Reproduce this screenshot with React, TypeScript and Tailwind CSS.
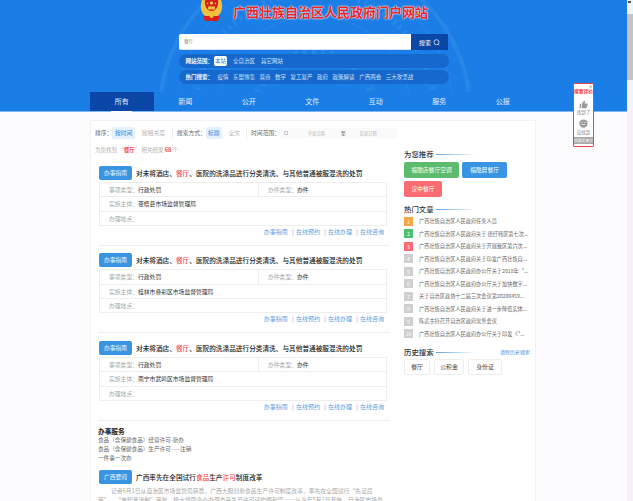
const tabs = ['所有', '新闻', '公开', '文件', '互动', '服务', '公报'];
const hotWords = ['疫情', '东盟博览', '营商', '数字', '复工复产', '政府', '政策解读', '广西两会', '三大攻坚战'];
const articles = [
  '广西壮族自治区人民政府任免人员',
  '广西壮族自治区人民政府关于 德纡韩区第七次...',
  '广西壮族自治区人民政府关于开展我区第六次...',
  '广西壮族自治区人民政府关于印发广西壮族自...',
  '广西壮族自治区人民政府办公厅关于2018年“...',
  '广西壮族自治区人民政府办公厅关于加快数字...',
  '关于自治区政协十二届三次会议第20200459...',
  '广西壮族自治区人民政府关于进一步降低实体...',
  '陈武主持召开自治区政府常务会议',
  '广西壮族自治区人民政府办公厅关于印发《“...',
];
const numColors = ['bg-[#f5a742]', 'bg-[#4cc26e]', 'bg-[#fb6b72]'];
const results = ['苍梧县市场监督管理局', '桂林市叠彩区市场监督管理局', '南宁市武鸣区市场监督管理局'];

function Emblem() {
  return (
    <svg width="25" height="22" viewBox="0 0 25 22" className="shrink-0">
      <path d="M3 0 C0 8 3 15 8 17 L17 17 C22 15 25 8 22 0 Z" fill="#f3c23c" />
      <path d="M6 0 C5 6 8 11 12.5 11 C17 11 20 6 19 0 Z" fill="#d8201f" />
      <circle cx="12.5" cy="3" r="1.6" fill="#f9d94a" />
      <circle cx="8.5" cy="3.5" r="0.7" fill="#f9d94a" />
      <circle cx="16.5" cy="3.5" r="0.7" fill="#f9d94a" />
      <rect x="9" y="6.5" width="7" height="3" fill="#f3c23c" />
      <path d="M4 16 L21 16 L19 21 L6 21 Z" fill="#d8201f" />
      <circle cx="12.5" cy="16" r="2" fill="#f3c23c" />
    </svg>
  );
}

function Pattern() {
  return (
    <svg width="330" height="92" viewBox="0 0 330 92" className="absolute left-[150px] top-0" fill="none" stroke="#4a97ec" strokeOpacity="0.3">
      <circle cx="165" cy="112" r="155" strokeWidth="4" />
      <circle cx="165" cy="112" r="138" strokeWidth="1" />
      <circle cx="165" cy="112" r="120" strokeWidth="6" strokeDasharray="3 4" />
      <circle cx="165" cy="112" r="96" strokeWidth="1" />
      <circle cx="165" cy="112" r="60" strokeWidth="8" strokeDasharray="4 5" />
    </svg>
  );
}

function Header() {
  return (
    <div className="bg-[#1b7ee6]">
      <div className="relative h-[92px] overflow-hidden">
        <Pattern />
        <div className="relative flex flex-col items-center">
          <div className="flex h-[34px] items-start gap-[9px]">
            <Emblem />
            <div className="mt-[3px] text-[13px] leading-[18px] font-bold text-[#e8252a] [text-shadow:0_0_2px_#fff,0_0_1px_#fff]">
              广西壮族自治区人民政府门户网站
            </div>
          </div>
          <div className="flex h-[16px] w-[269px]">
            <div className="flex flex-1 items-center rounded-l-[2px] border-b border-[#cfe2f7] bg-white pl-[5px] text-[4.5px] text-[#888]">餐厅</div>
            <div className="flex w-[37px] items-center justify-center gap-[2px] bg-[#0a47a6] text-[6px] text-white">
              搜索
              <svg width="7" height="7" viewBox="0 0 10 10" fill="none" stroke="#fff" strokeWidth="1"><circle cx="5" cy="4.6" r="3.6" /><path d="M7.4 7.4 L9 9" /></svg>
            </div>
          </div>
          <div className="mt-[4px] flex h-[14px] w-[270px] items-center rounded-[7px] bg-[#1768cc] pl-[7px] text-[5.5px] text-[#cfe3fa]">
            <span className="font-bold text-white">网站范围：</span>
            <span className="ml-[1px] rounded-[2px] bg-white px-[1px] py-[1px] text-[#2b7fdf]">本站</span>
            <span className="ml-[6px]">全自治区</span>
            <span className="ml-[6px]">其它网站</span>
          </div>
          <div className="mt-[2px] flex h-[14px] w-[270px] items-center gap-[4.5px] rounded-[7px] bg-[#1768cc] pl-[7px] text-[5.5px] whitespace-nowrap text-[#cfe3fa]">
            <span className="font-bold text-white">热门搜索：</span>
            {hotWords.map((w) => (
              <span key={w}>{w}</span>
            ))}
          </div>
        </div>
      </div>
      <div className="flex h-[20px] border-b border-[#7db5f0] pl-[90px]">
        {tabs.map((t, i) => (
          <div key={t} className={`relative flex w-[63.5px] items-center justify-center text-[7px] text-[#e3f0fd] ${i === 0 ? 'bg-[#0a47a6]' : ''}`}>
            {t}
            {i === 0 && <span className="absolute bottom-[-1px] left-[21px] h-[1px] w-[21px] bg-white" />}
          </div>
        ))}
      </div>
    </div>
  );
}

function FilterBar() {
  return (
    <div className="flex h-[12px] items-center pl-[4px] text-[5.8px] whitespace-nowrap text-[#666]">
      <span className="w-[18px]">排序：</span>
      <span className="rounded-[2px] bg-[#e4f1fd] px-[2.5px] py-[2px] leading-[8px] text-[#2f86df]">按时间</span>
      <span className="ml-[7px] text-[#b5b5b5]">按相关度</span>
      <span className="ml-[7px] h-[12px] w-px bg-[#eee]" />
      <span className="ml-[4px] w-[30px]">搜索方式：</span>
      <span className="rounded-[2px] bg-[#e4f1fd] px-[2px] py-[2px] leading-[8px] text-[#2f86df]">标题</span>
      <span className="ml-[7px] text-[#b5b5b5]">全文</span>
      <span className="ml-[6px] h-[12px] w-px bg-[#eee]" />
      <span className="ml-[4px] w-[31px]">时间范围：</span>
      <div className="flex h-[10px] w-[129px] items-center bg-[#fafafa] pl-[4px] text-[4.2px] text-[#b8b8b8]">
        <span className="h-[4px] w-[4px] border border-[#ccc]" />
        <span className="ml-[20px]">开始日期</span>
        <span className="ml-[16px] text-[5px] text-[#555]">至</span>
        <span className="ml-[14px]">结束日期</span>
      </div>
    </div>
  );
}

function Tag({ label }: { label: string }) {
  return (
    <span className="flex h-[14px] w-[33px] shrink-0 items-center justify-center rounded-[2px] bg-[#3a94e4] text-[5.8px] text-[#e8f4ff]">{label}</span>
  );
}

function ResultItem({ org }: { org: string }) {
  return (
    <div className="mx-[7px] mb-[7.5px] border-b border-[#eee] pr-[3px] pb-[8px] pl-[1px]">
      <div className="flex items-center gap-[4px]">
        <Tag label="办事指南" />
        <div className="text-[6.67px] font-medium whitespace-nowrap text-[#222]">
          对未将酒店、<span className="text-[#f5484d]">餐厅</span>、医院的洗涤品进行分类清洗、与其他普通被服混洗的处罚
        </div>
      </div>
      <div className="mt-[2px] border border-[#eee] text-[5.8px] leading-[13.33px] text-[#333]">
        <div className="flex border-b border-[#eee]">
          <div className="w-[159px] border-r border-[#eee] pl-[9px]"><span className="text-[#aaa]">事项类型：</span>行政处罚</div>
          <div className="pl-[9px]"><span className="text-[#aaa]">办件类型：</span>办件</div>
        </div>
        <div className="border-b border-[#eee] pl-[9px]"><span className="text-[#aaa]">实施主体：</span>{org}</div>
        <div className="pl-[9px]"><span className="text-[#aaa]">办理地点：</span></div>
      </div>
      <div className="mt-[1px] pr-[3px] text-right text-[6px] leading-[10px] text-[#5c9fe2] [word-spacing:0.8px]">办事指南 &nbsp;| 在线预约 &nbsp;| 在线办理 &nbsp;| 在线咨询</div>
    </div>
  );
}

function SideTitle({ text }: { text: string }) {
  return (
    <div className="flex items-center">
      <span className="text-[7.4px] leading-[12px] font-medium text-[#333]">{text}</span>
      <span className="ml-[2px] h-[1px] w-[40px] bg-gradient-to-r from-[#5aa3ea] to-transparent" />
    </div>
  );
}

function Sidebar() {
  return (
    <div className="w-[126px] pt-[27px]">
      <SideTitle text="为您推荐" />
      <div className="mt-[2px] flex flex-wrap gap-x-[3px] gap-y-[3px] text-[5.8px] text-[#f4fff4]">
        <span className="flex h-[16px] w-[55px] items-center justify-center rounded-[2px] bg-[#5dbb6e]">福酷店餐厅空调</span>
        <span className="flex h-[16px] w-[45px] items-center justify-center rounded-[2px] bg-[#3a94e4]">福酷居餐厅</span>
        <span className="flex h-[16px] w-[38px] items-center justify-center rounded-[2px] bg-[#fb6b72]">汉中餐厅</span>
      </div>
      <div className="mt-[6px]"><SideTitle text="热门文章" /></div>
      <div>
        {articles.map((a, i) => (
          <div key={a} className="flex h-[12.5px] items-center">
            <span className={`flex h-[9px] w-[9px] items-center justify-center text-[5px] text-white ${numColors[i] ?? 'bg-[#cfcfcf]'}`}>{i + 1}</span>
            <span className="ml-[6px] text-[5.2px] whitespace-nowrap text-[#666]">{a}</span>
          </div>
        ))}
      </div>
      <div className="mt-[6px] flex items-center justify-between">
        <SideTitle text="历史搜索" />
        <span className="text-[5px] text-[#3a8fe4]">清除历史搜索</span>
      </div>
      <div className="mt-[1px] flex gap-[4px] text-[5.8px] text-[#444]">
        <span className="flex h-[16px] w-[26px] items-center justify-center rounded-[2px] border border-[#eee]">餐厅</span>
        <span className="flex h-[16px] w-[30px] items-center justify-center rounded-[2px] border border-[#eee]">公积金</span>
        <span className="flex h-[16px] w-[34px] items-center justify-center rounded-[2px] border border-[#eee]">身份证</span>
      </div>
    </div>
  );
}

function Feedback() {
  return (
    <div className="absolute top-[83px] left-[573px] flex h-[64px] w-[21px] flex-col items-center rounded-[1px] border border-[#ee3f4a] bg-white">
      <span className="absolute top-0 right-[1px] text-[4px] leading-[4px] text-[#555]">✕</span>
      <span className="mt-[4px] text-[4.8px] leading-[6px] font-bold whitespace-nowrap text-[#f0303a]">搜索评价</span>
      <svg width="11" height="9" viewBox="0 0 24 24" fill="#9a9a9a" className="mt-[6px]">
        <path d="M2 10h4v12H2zM8 22V10l5-8c2 0 3 1.500 3 3l-1 4h6c1.500 0 2.500 1.500 2 3l-2.500 8c-.3 1.200-1.200 2-2.500 2z" />
      </svg>
      <span className="text-[4.5px] leading-[6px] text-[#888]">找到了</span>
      <svg width="9" height="9" viewBox="0 0 24 24" className="mt-[4px]">
        <circle cx="12" cy="12" r="11" fill="#9a9a9a" />
        <rect x="7" y="14" width="10" height="2" fill="#eee" />
        <circle cx="8" cy="9" r="1.500" fill="#eee" />
        <circle cx="16" cy="9" r="1.500" fill="#eee" />
      </svg>
      <span className="mt-[1px] text-[4.5px] leading-[6px] text-[#888]">没找到</span>
      <span className="mt-[2px] flex h-[7px] w-[19px] items-center justify-center bg-[#a9a9a9] text-[3.8px] whitespace-nowrap text-white">我要提建议</span>
    </div>
  );
}

function Scrollbar() {
  return (
    <div className="flex w-[6px] flex-col bg-[#f6f1f6]">
      <div className="relative h-[14px]">
        <span className="absolute top-[1px] left-[1px] h-[2px] w-[3px] bg-[#555]" />
      </div>
      <div className="h-[66px] bg-[#c4c4c4]" />
    </div>
  );
}

export default function App() {
  return (
    <div className="relative flex h-[501px] w-[633px] overflow-hidden bg-[#fcfcfe] font-['Noto_Sans_CJK_SC','Liberation_Sans',sans-serif]">
      <div className="w-[627px]">
        <Header />
        <div className="mt-[8px] ml-[90px] flex h-[400px] w-[446px] border border-b-0 border-[#f2f2f2] bg-white">
          <div className="w-[306px]">
            <div className="mt-[6px]"><FilterBar /></div>
            <div className="mt-[7px] pl-[4px] text-[5.5px] leading-[8px] text-[#b0b0b0]">
              为您找到 “<span className="font-bold text-[#f5484d]">餐厅</span>” 相关结果 <span className="font-bold text-[#f5484d]">68</span> 个
            </div>
            <div className="mt-[12px]">
              {results.map((org) => (
                <ResultItem key={org} org={org} />
              ))}
            </div>
            <div className="mx-[7px] -mt-[2px]">
              <div className="text-[6.67px] leading-[10px] font-bold text-[#222]">办事服务</div>
              <div className="text-[5.6px] leading-[8.6px] text-[#666]">
                <div>食品（含保健食品）经营许可-新办</div>
                <div>食品（含保健食品）生产许可——注销</div>
                <div>一件事一次办</div>
              </div>
              <div className="mt-[8px] ml-[1px] flex items-center gap-[4px]">
                <Tag label="广西要闻" />
                <div className="text-[6.67px] font-medium whitespace-nowrap text-[#222]">
                  广西率先在全国试行<span className="text-[#f5484d]">食品</span>生产<span className="text-[#f5484d]">许可</span>制度改革
                </div>
              </div>
              <div className="mt-[2px] w-[288px] indent-[13px] text-[5.8px] leading-[9px] text-[#aaa]">
                记者6月1日从自治区市场监管局获悉，广西大胆创新食品生产许可制度改革，率先在全国试行“先证后审”、“告知承诺制”审批，极大增强企业办理食品生产许可证的便利度……从今年5月1日开始，自治区市场监管局
              </div>
            </div>
          </div>
          <div className="ml-[7px]"><Sidebar /></div>
        </div>
      </div>
      <Scrollbar />
      <Feedback />
    </div>
  );
}
